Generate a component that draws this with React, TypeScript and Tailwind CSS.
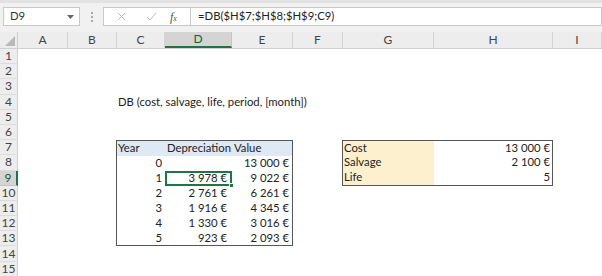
import React from "react";

const rows = Array.from({ length: 15 }, (_, i) => i + 1);
const cols = [
  { n: "A", w: "w-[50px]" },
  { n: "B", w: "w-[49px]" },
  { n: "C", w: "w-[48px]" },
  { n: "D", w: "w-[67px]" },
  { n: "E", w: "w-[61px]" },
  { n: "F", w: "w-[50px]" },
  { n: "G", w: "w-[91px]" },
  { n: "H", w: "w-[119px]" },
  { n: "I", w: "w-[49px]" },
];

const data = [
  ["0", "", "13 000 €"],
  ["1", "3 978 €", "9 022 €"],
  ["2", "2 761 €", "6 261 €"],
  ["3", "1 916 €", "4 345 €"],
  ["4", "1 330 €", "3 016 €"],
  ["5", "923 €", "2 093 €"],
];

export default function App() {
  return (
    <div
      className="w-[602px] h-[276px] overflow-hidden bg-white text-[11.3px] text-[#222]"
      style={{ fontFamily: "Lato, 'Open Sans', sans-serif" }}
    >
      {/* toolbar */}
      <div className="h-[32px] bg-[#f1f1f1] border-t-[3px] border-[#e2e2e2] flex items-start pt-[4px] pl-[3px]">
        <div className="w-[77px] shrink-0 h-[19px] bg-white border border-[#c9c9c9] flex items-center pl-[6px] pr-[5px] justify-between">
          <span className="text-[#333]">D9</span>
          <svg width="7" height="4" viewBox="0 0 7 4">
            <path d="M0 0 L7 0 L3.5 4 Z" fill="#666" />
          </svg>
        </div>
        <div className="w-[23px] shrink-0 h-[19px] flex flex-col items-center justify-center gap-[2px]">
          <div className="w-[2px] h-[2px] bg-[#aaa]" />
          <div className="w-[2px] h-[2px] bg-[#aaa]" />
          <div className="w-[2px] h-[2px] bg-[#aaa]" />
        </div>
        <div className="w-[87px] shrink-0 h-[19px] bg-white border border-[#c9c9c9] border-r-0 flex items-center">
          <svg className="ml-[13px]" width="9" height="9" viewBox="0 0 9 9">
            <path d="M1 1 L8 8 M8 1 L1 8" stroke="#bbb" strokeWidth="1" />
          </svg>
          <svg className="ml-[20px]" width="11" height="9" viewBox="0 0 11 9">
            <path d="M1 5 L4 8 L10 1" stroke="#bbb" strokeWidth="1" fill="none" />
          </svg>
          <span
            className="ml-[13px] italic text-[#555] text-[12px] leading-none"
            style={{ fontFamily: "'Liberation Serif', serif" }}
          >
            f<span className="text-[8px]">x</span>
          </span>
        </div>
        <div className="flex-1 h-[19px] bg-white border border-[#c9c9c9] flex items-center pl-[7px] text-[#222]">
          =DB($H$7;$H$8;$H$9;C9)
        </div>
      </div>

      {/* column headers */}
      <div className="flex h-[17px] bg-[#ededed] border-b border-[#d0d0d0] text-[12px]">
        <div className="w-[18px] shrink-0 h-full border-r border-[#d0d0d0] relative">
          <svg className="absolute right-[2px] bottom-[2px]" width="10" height="10" viewBox="0 0 10 10">
            <path d="M10 0 L10 10 L0 10 Z" fill="#b9b9b9" />
          </svg>
        </div>
        {cols.map((c) => (
          <div
            key={c.n}
            className={
              c.n === "D"
                ? `${c.w} shrink-0 h-full flex items-center justify-center bg-[#d4d4d4] border-r border-[#c4c4c4] border-b-2 border-b-[#217346] text-[#1d5b36]`
                : `${c.w} shrink-0 h-full flex items-center justify-center border-r border-[#d4d4d4] text-[#444]`
            }
          >
            {c.n}
          </div>
        ))}
      </div>

      {/* body */}
      <div className="flex">
        <div className="w-[18px] shrink-0 flex flex-col text-[12px]">
          {rows.map((r) => (
            <div
              key={r}
              className={
                r === 9
                  ? "h-[15.2px] shrink-0 flex items-center justify-center bg-[#d4d4d4] border-r-2 border-[#217346] border-b border-b-[#c4c4c4] text-[#1d5b36]"
                  : "h-[15.2px] shrink-0 flex items-center justify-center bg-[#ededed] border-r border-[#d0d0d0] border-b border-b-[#dcdcdc] text-[#444]"
              }
            >
              {r}
            </div>
          ))}
        </div>

        <div className="grid shrink-0 grid-cols-[50px_49px_48px_67px_61px_50px_91px_119px_49px] grid-rows-[repeat(15,15.2px)]">
          <div className="col-start-3 col-span-4 row-start-4 flex items-center pl-[1px] whitespace-nowrap">
            DB (cost, salvage, life, period, [month])
          </div>

          {/* table 1 */}
          <div className="col-start-3 col-span-3 row-start-7 row-span-7 border border-[#555] -ml-px grid grid-cols-[48px_67px_60px] grid-rows-7">
            <div className="col-span-3 bg-[#dfe8f5] flex items-center">
              <div className="w-[48px] pl-[1px]">Year</div>
              <div className="w-[67px] pl-[2px]">Depreciation</div>
              <div className="w-[60px] pl-[2px]">Value</div>
            </div>
            {data.map((d, i) => (
              <React.Fragment key={i}>
                <div className="flex items-center justify-end pr-[3px]">{d[0]}</div>
                <div
                  className={
                    i === 1
                      ? "relative flex items-center justify-end pr-[3px] border-2 border-[#217346]"
                      : "flex items-center justify-end pr-[5px]"
                  }
                >
                  {d[1]}
                  {i === 1 && (
                    <div className="absolute -right-[4px] -bottom-[4px] w-[5px] h-[5px] bg-[#217346] border border-white" />
                  )}
                </div>
                <div className="flex items-center justify-end pr-[3px]">{d[2]}</div>
              </React.Fragment>
            ))}
          </div>

          {/* table 2 */}
          <div className="col-start-7 col-span-2 row-start-7 row-span-3 border border-[#555] -ml-px grid grid-cols-[91px_118px] grid-rows-3">
            <div className="bg-[#fdf0cf] flex items-center pl-[1px]">Cost</div>
            <div className="flex items-center justify-end pr-[2px]">13 000 €</div>
            <div className="bg-[#fdf0cf] flex items-center pl-[1px]">Salvage</div>
            <div className="flex items-center justify-end pr-[2px]">2 100 €</div>
            <div className="bg-[#fdf0cf] flex items-center pl-[1px]">Life</div>
            <div className="flex items-center justify-end pr-[2px]">5</div>
          </div>
        </div>
      </div>
    </div>
  );
}
